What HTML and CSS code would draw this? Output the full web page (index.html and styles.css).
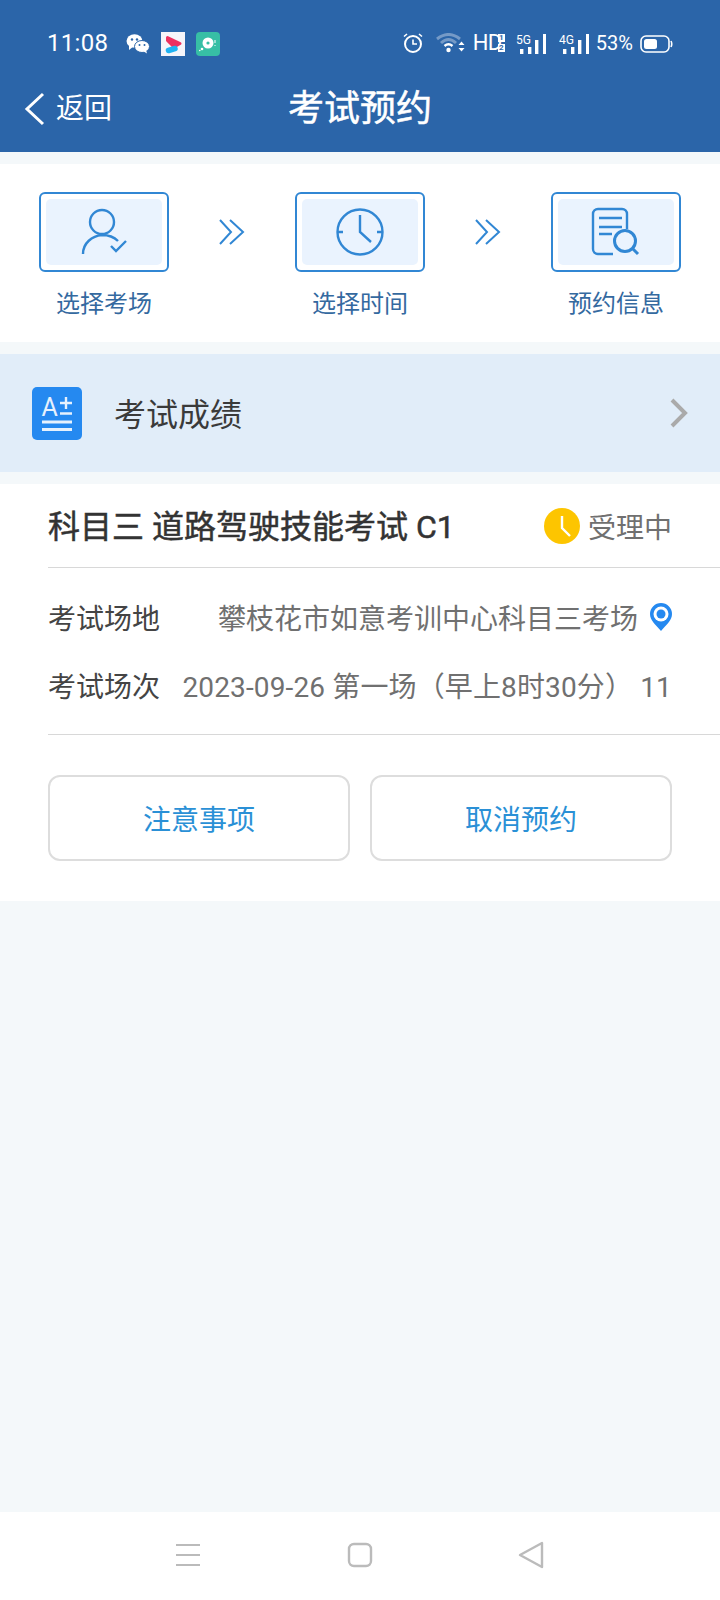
FILE: index.html
```html
<!DOCTYPE html>
<html lang="zh-CN">
<head>
    <meta charset="UTF-8">
    <meta name="viewport" content="width=device-width, initial-scale=1.0">
    <title>考试预约</title>
    <link rel="stylesheet" href="styles.css">
</head>
<body>
    <div class="page">
        <header class="header">
            <div class="status-bar">
                <span class="time">11:08</span>
                <svg class="app-wechat" width="24" height="20" viewBox="0 0 24 20">
                    <ellipse cx="8.5" cy="7" rx="8" ry="6.8" fill="#fff"/>
                    <path d="M3 11 L3 16 L8 12 Z" fill="#fff"/>
                    <ellipse cx="16" cy="12.5" rx="7.5" ry="6" fill="#fff" stroke="#2b65a9" stroke-width="1"/>
                    <path d="M20 16 L21 19.5 L17 17 Z" fill="#fff"/>
                    <circle cx="6" cy="5.5" r="1.2" fill="#2b65a9"/>
                    <circle cx="11" cy="5.5" r="1.2" fill="#2b65a9"/>
                    <circle cx="13.5" cy="11" r="1" fill="#2b65a9"/>
                    <circle cx="18.5" cy="11" r="1" fill="#2b65a9"/>
                </svg>
                <svg class="app-icon" width="24" height="24" viewBox="0 0 24 24">
                    <rect width="24" height="24" fill="#f6f5fa"/>
                    <path d="M6.5 5.5 L19 11.5 L13 15 L6.5 8.5 Z" fill="#ee3160" stroke="#ee3160" stroke-width="3" stroke-linejoin="round"/>
                    <path d="M7.5 18.5 L14 16.5" fill="none" stroke="#21b3f2" stroke-width="5.5" stroke-linecap="round"/>
                </svg>
                <svg class="app-icon" width="24" height="24" viewBox="0 0 24 24">
                    <rect width="24" height="24" rx="4" fill="#37bfa5"/>
                    <circle cx="12" cy="11" r="5.5" fill="#fff"/>
                    <circle cx="12" cy="11" r="1.6" fill="#37bfa5"/>
                    <circle cx="6" cy="17" r="1.3" fill="#fff"/>
                    <circle cx="3.8" cy="18.5" r="0.8" fill="#fff"/>
                    <rect x="18.5" y="8" width="1" height="3" fill="#fff"/>
                    <rect x="18.5" y="13" width="1" height="1" fill="#fff"/>
                </svg>
                <div class="status-right">
                    <svg class="st-alarm" width="22" height="22" viewBox="0 0 22 22" fill="none" stroke="#fff">
                        <circle cx="11" cy="12" r="8" stroke-width="2"/>
                        <path d="M11 7.5 V12 H15" stroke-width="1.6"/>
                        <path d="M2 4.5 L5 2 M20 4.5 L17 2" stroke-width="1.6"/>
                    </svg>
                    <svg class="st-wifi" width="29" height="20" viewBox="0 0 29 20" fill="none">
                        <path d="M1 6 Q12.5 -3 24 6" stroke="#fff" stroke-opacity=".35" stroke-width="3"/>
                        <path d="M5 10 Q12.5 3 20 10" stroke="#fff" stroke-opacity=".35" stroke-width="3"/>
                        <path d="M8.5 13 Q12.5 9.5 16.5 13" stroke="#fff" stroke-width="2.4"/>
                        <circle cx="12.5" cy="17" r="2.2" fill="#fff"/>
                        <path d="M22.5 12 L25.5 8.5 L28.5 12 Z M22.5 15 L25.5 18.5 L28.5 15 Z" fill="#fff"/>
                    </svg>
                    <span class="st-hd">HD</span>
                    <span class="sim-tiles">
                        <span class="sim-tile">1</span>
                        <span class="sim-tile">2</span>
                    </span>
                    <svg class="st-signal" width="30" height="24" viewBox="0 -4 30 24" fill="#fff">
                        <text x="0" y="10" font-size="13" textLength="15" lengthAdjust="spacingAndGlyphs" font-family="Roboto">5G</text>
                        <rect x="4" y="15" width="3.4" height="5"/>
                        <rect x="12" y="13" width="3.4" height="7"/>
                        <rect x="19" y="6" width="3.4" height="14"/>
                        <rect x="27" y="0" width="3" height="20"/>
                    </svg>
                    <svg class="st-signal" width="30" height="24" viewBox="0 -4 30 24" fill="#fff">
                        <text x="0" y="10" font-size="13" textLength="15" lengthAdjust="spacingAndGlyphs" font-family="Roboto">4G</text>
                        <rect x="4" y="15" width="3.4" height="5"/>
                        <rect x="12" y="13" width="3.4" height="7"/>
                        <rect x="19" y="6" width="3.4" height="14"/>
                        <rect x="27" y="0" width="3" height="20"/>
                    </svg>
                    <span class="st-battery-text">53%</span>
                    <svg class="st-battery" width="33" height="18" viewBox="0 0 33 18" fill="none">
                        <rect x="1" y="1" width="28" height="16" rx="5" stroke="#fff" stroke-width="1.6"/>
                        <rect x="4" y="4" width="13" height="10" rx="2.5" fill="#fff"/>
                        <path d="M31 6 Q32.5 9 31 12" stroke="#fff" stroke-width="1.6"/>
                    </svg>
                </div>
            </div>
            <div class="nav-bar">
                <div class="nav-back">
                    <svg width="22" height="34" viewBox="0 0 22 34" fill="none" stroke="#fff" stroke-width="3">
                        <path d="M19 2 L3 17 L19 32"/>
                    </svg>
                    <span>返回</span>
                </div>
                <h1 class="nav-title">考试预约</h1>
            </div>
        </header>

        <section class="steps">
            <div class="step">
                <div class="step-box">
                    <div class="step-inner">
                        <svg class="step-icon" width="64" height="64" viewBox="0 0 64 64">
                            <circle cx="30" cy="22" r="12"/>
                            <path d="M11 54 C11 43 20 36 30 35 C36 35 42 37 46 41"/>
                            <path d="M39 46 L44 51 L54 41"/>
                        </svg>
                    </div>
                </div>
                <span class="step-label">选择考场</span>
            </div>
            <svg class="step-arrow" width="26" height="26" viewBox="0 0 26 26">
                <path d="M1 1 L12 13 L1 25 M11 1 L24 13 L11 25"/>
            </svg>
            <div class="step">
                <div class="step-box">
                    <div class="step-inner">
                        <svg class="step-icon" width="64" height="64" viewBox="0 0 64 64">
                            <circle cx="32" cy="32" r="22.5"/>
                            <path d="M32 15 V32 L43 42"/>
                            <path d="M9.5 32 H15 M49 32 H54.5"/>
                        </svg>
                    </div>
                </div>
                <span class="step-label">选择时间</span>
            </div>
            <svg class="step-arrow" width="26" height="26" viewBox="0 0 26 26">
                <path d="M1 1 L12 13 L1 25 M11 1 L24 13 L11 25"/>
            </svg>
            <div class="step">
                <div class="step-box">
                    <div class="step-inner">
                        <svg class="step-icon" width="64" height="64" viewBox="0 0 64 64">
                            <path d="M43 29 V14 a5 5 0 0 0 -5 -5 H14 a5 5 0 0 0 -5 5 V49 a5 5 0 0 0 5 5 H29"/>
                            <path d="M15 18 H38 M15 27 H38 M15 34 H28"/>
                            <circle class="step-lens" cx="41" cy="41" r="10.5"/>
                            <path class="step-lens" d="M48 48 L54 54"/>
                        </svg>
                    </div>
                </div>
                <span class="step-label">预约信息</span>
            </div>
        </section>

        <section class="score-row">
            <svg class="score-icon" width="50" height="53" viewBox="0 0 50 53">
                <rect width="50" height="53" rx="5" fill="#2589f0"/>
                <text x="9.5" y="29" font-size="25" font-family="Roboto" fill="#e6f1fd">A</text>
                <path d="M34 10 V22 M28 16 H40 M28 26.5 H40" stroke="#e6f1fd" stroke-width="2.4" fill="none"/>
                <path d="M10 35 H40 M10 42.5 H40" stroke="#e6f1fd" stroke-width="3" fill="none"/>
            </svg>
            <span class="score-text">考试成绩</span>
            <svg class="score-chevron" width="18" height="30" viewBox="0 0 18 30" fill="none" stroke="#aaa" stroke-width="4">
                <path d="M2 2 L15 15 L2 28"/>
            </svg>
        </section>

        <section class="card">
            <div class="card-head">
                <h2 class="exam-name">科目三 道路驾驶技能考试 C1</h2>
                <div class="exam-state">
                    <svg width="36" height="36" viewBox="0 0 36 36">
                        <circle cx="18" cy="18" r="18" fill="#fdc500"/>
                        <path d="M18 8 V20 L26 28" fill="none" stroke="#fff" stroke-width="2.4"/>
                    </svg>
                    <span>受理中</span>
                </div>
            </div>
            <div class="card-info">
                <div class="info-row">
                    <span class="info-label">考试场地</span>
                    <span class="info-value">攀枝花市如意考训中心科目三考场</span>
                    <svg class="info-pin" width="22" height="28" viewBox="0 0 22 28">
                        <path d="M11 28 C5 21 0 17 0 11 A11 11 0 0 1 22 11 C22 17 17 21 11 28 Z" fill="#2589f0"/>
                        <circle cx="11" cy="11" r="7.5" fill="#fff"/>
                        <circle cx="11" cy="11" r="4.5" fill="#2589f0"/>
                    </svg>
                </div>
                <div class="info-row">
                    <span class="info-label">考试场次</span>
                    <span class="info-value info-session">2023-09-26 第一场（早上8时30分） 11</span>
                </div>
            </div>
            <div class="card-actions">
                <button class="action-btn" type="button">注意事项</button>
                <button class="action-btn" type="button">取消预约</button>
            </div>
        </section>

        <div class="filler"></div>

        <footer class="nav-keys">
            <svg width="26" height="24" viewBox="0 0 26 24" stroke="#bbb" stroke-width="2" fill="none">
                <path d="M1 2 H25 M1 12 H25 M1 22 H25"/>
            </svg>
            <svg width="26" height="26" viewBox="0 0 26 26" stroke="#bbb" stroke-width="2.4" fill="none">
                <rect x="2" y="2" width="22" height="22" rx="5"/>
            </svg>
            <svg width="26" height="28" viewBox="0 0 26 28" stroke="#bbb" stroke-width="2.4" fill="none" stroke-linejoin="round">
                <path d="M24 2 V26 L2 14 Z"/>
            </svg>
        </footer>
    </div>
</body>
</html>
```

FILE: styles.css
```css
* {
    box-sizing: border-box;
}
html, body {
    margin: 0;
    padding: 0;
}
body {
    font-family: Roboto, "Noto Sans CJK SC", sans-serif;
    background-color: #f4f8fa;
    color: #333;
    overflow: hidden;
}
.page {
    width: 720px;
    height: 1600px;
    display: flex;
    flex-direction: column;
}

/* top blue block */
.header {
    height: 152px;
    background-color: #2b65a9;
    color: #fff;
    flex-shrink: 0;
}
.status-bar {
    height: 86px;
    padding: 28px 47px 0 47px;
    display: flex;
    align-items: flex-start;
}
.time {
    font-size: 24px;
    line-height: 30px;
    letter-spacing: 0.3px;
    width: 79px;
}
.app-wechat {
    margin-top: 6px;
}
.app-icon {
    margin-top: 4px;
    margin-left: 11px;
}
.status-right {
    margin-left: auto;
    display: flex;
    align-items: flex-start;
}
.st-alarm {
    margin-top: 4px;
}
.st-wifi {
    margin-top: 5px;
    margin-left: 12px;
}
.st-hd {
    font-size: 22px;
    line-height: 30px;
    margin-left: 8px;
    width: 25px;
    letter-spacing: -0.8px;
}
.sim-tiles {
    display: flex;
    flex-direction: column;
    gap: 2px;
    margin-top: 6px;
}
.sim-tile {
    width: 7px;
    height: 8px;
    background-color: #fff;
    color: #2b65a9;
    font-size: 8px;
    line-height: 8px;
    font-weight: 700;
    text-align: center;
}
.st-signal {
    margin-top: 2px;
    margin-left: 11px;
}
.st-signal + .st-signal {
    margin-left: 13px;
}
.st-battery-text {
    font-size: 20px;
    line-height: 30px;
    margin-left: 7px;
}
.st-battery {
    margin-top: 7px;
    margin-left: 7px;
}
.nav-bar {
    height: 66px;
    position: relative;
    display: flex;
    justify-content: center;
    align-items: flex-start;
}
.nav-back {
    position: absolute;
    left: 24px;
    top: 5px;
    display: flex;
    align-items: center;
    gap: 10px;
    font-size: 28px;
    line-height: 36px;
}
.nav-title {
    margin: 0;
    font-size: 36px;
    font-weight: 400;
    -webkit-text-stroke: 0.5px #fff;
    line-height: 46px;
}

/* three steps */
.steps {
    margin-top: 12px;
    height: 178px;
    background-color: #fff;
    padding: 28px 39px 0 39px;
    display: flex;
    justify-content: space-between;
    align-items: flex-start;
}
.step {
    width: 130px;
    display: flex;
    flex-direction: column;
    align-items: center;
}
.step-box {
    width: 130px;
    height: 80px;
    border: 2px solid #3187d4;
    border-radius: 6px;
    padding: 5px;
}
.step-inner {
    height: 66px;
    background-color: #eaf3fe;
    border-radius: 5px;
    display: flex;
    align-items: center;
    justify-content: center;
}
.step-icon {
    fill: none;
    stroke: #3187d4;
    stroke-width: 2.4;
}
.step-lens {
    stroke-width: 3;
}
.step-label {
    margin-top: 16px;
    font-size: 24px;
    line-height: 32px;
    color: #34699f;
}
.step-arrow {
    margin-top: 27px;
    fill: none;
    stroke: #3187d4;
    stroke-width: 2;
}

/* score link */
.score-row {
    margin-top: 12px;
    height: 118px;
    background-color: #e1edf9;
    padding: 0 32px 0 32px;
    display: flex;
    align-items: center;
}
.score-text {
    margin-left: 32px;
    padding-bottom: 2px;
    font-size: 32px;
    color: #3a3a3a;
}
.score-chevron {
    margin-left: auto;
}

/* exam card */
.card {
    margin-top: 12px;
    height: 417px;
    background-color: #fff;
    padding-left: 48px;
}
.card-head {
    height: 84px;
    padding-right: 48px;
    border-bottom: 1px solid #d8d8d8;
    display: flex;
    justify-content: space-between;
    align-items: center;
}
.exam-name {
    margin: 0 0 4px 0;
    font-size: 32px;
    font-weight: 400;
    -webkit-text-stroke: 0.5px #333;
    color: #333;
}
.exam-state {
    display: flex;
    align-items: center;
    gap: 8px;
    font-size: 28px;
    color: #707070;
}
.card-info {
    height: 167px;
    padding: 15px 50px 0 0;
    border-bottom: 1px solid #d8d8d8;
}
.info-row {
    height: 68px;
    display: flex;
    align-items: center;
    font-size: 28px;
}
.info-label {
    color: #444;
}
.info-value {
    margin-left: auto;
    color: #707070;
}
.info-session {
    letter-spacing: 0.14px;
    margin-right: -2px;
}
.info-pin {
    margin-left: 12px;
    margin-right: -2px;
}
.card-actions {
    margin-top: 40px;
    padding-right: 48px;
    display: flex;
    gap: 20px;
}
.action-btn {
    flex: 1;
    height: 86px;
    background-color: #fff;
    border: 2px solid #ddd;
    border-radius: 12px;
    font-family: inherit;
    font-size: 28px;
    color: #2a90d6;
}

.filler {
    flex: 1;
}

/* system keys */
.nav-keys {
    height: 88px;
    background-color: #fff;
    flex-shrink: 0;
    padding: 0 176px 2px 175px;
    display: flex;
    justify-content: space-between;
    align-items: center;
}
```
